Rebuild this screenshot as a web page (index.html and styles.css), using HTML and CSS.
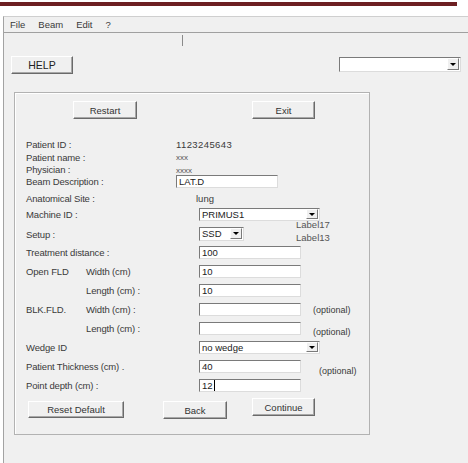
FILE: index.html
```html
<!DOCTYPE html>
<html lang="en">
<head>
    <meta charset="UTF-8">
    <meta name="viewport" content="width=device-width, initial-scale=1.0">
    <title>Beam Setup</title>
    <link rel="stylesheet" href="styles.css">
</head>
<body>
    <div class="strip"></div>
    <div class="window">
        <div class="menubar">
            <span>File</span>
            <span>Beam</span>
            <span>Edit</span>
            <span>?</span>
        </div>
        <div class="toolbar"><div class="sep"></div></div>
        <div class="top-row">
            <button class="btn help">HELP</button>
            <div class="combo top-combo">
                <div class="field"></div>
                <div class="drop"></div>
            </div>
        </div>

        <div class="panel">
            <div class="btn-row">
                <button class="btn restart">Restart</button>
                <button class="btn exit">Exit</button>
            </div>

            <div class="info">
                <div class="row r-id"><span class="lbl">Patient ID :</span><span class="val digits">1123245643</span></div>
                <div class="row r-name"><span class="lbl">Patient name :</span><span class="val small">xxx</span></div>
                <div class="row r-phys"><span class="lbl">Physician :</span><span class="val small low">xxxx</span></div>
                <div class="row r-desc"><span class="lbl">Beam Description :</span><div class="text desc">LAT.D</div></div>
                <div class="row r-site"><span class="lbl">Anatomical Site :</span><span class="val lung">lung</span></div>
                <div class="row r-machine">
                    <span class="lbl l2">Machine ID :</span>
                    <div class="combo machine"><div class="field">PRIMUS1</div><div class="drop"></div></div>
                </div>
                <div class="row r-setup">
                    <span class="lbl l2">Setup :</span>
                    <div class="combo setup"><div class="field">SSD</div><div class="drop"></div></div>
                    <div class="tags">
                        <div>Label17</div>
                        <div>Label13</div>
                    </div>
                </div>
            </div>

            <div class="fields">
                <div class="row"><span class="lbl l2">Treatment distance :</span><div class="text">100</div></div>
                <div class="row"><span class="lbl l2"><span class="grp">Open FLD</span>Width (cm)</span><div class="text">10</div></div>
                <div class="row"><span class="lbl l2"><span class="grp"></span>Length (cm) :</span><div class="text">10</div></div>
                <div class="row"><span class="lbl l2"><span class="grp">BLK.FLD.</span>Width (cm) :</span><div class="text"></div><span class="opt">(optional)</span></div>
                <div class="row"><span class="lbl l2"><span class="grp"></span>Length (cm) :</span><div class="text"></div><span class="opt low">(optional)</span></div>
                <div class="row">
                    <span class="lbl l2">Wedge ID</span>
                    <div class="combo machine"><div class="field">no wedge</div><div class="drop"></div></div>
                </div>
                <div class="row"><span class="lbl l2">Patient Thickness (cm) .</span><div class="text">40</div><span class="opt far">(optional)</span></div>
                <div class="row"><span class="lbl l2">Point depth (cm) :</span><div class="text"><span class="caret">12</span></div></div>
            </div>

            <div class="bottom-row">
                <button class="btn reset">Reset Default</button>
                <button class="btn back">Back</button>
                <button class="btn continue">Continue</button>
            </div>
        </div>
    </div>
</body>
</html>
```

FILE: styles.css
```css
* {
    margin: 0;
    padding: 0;
    box-sizing: border-box;
}

body {
    background: #fff;
    font-family: "Liberation Sans", Arial, sans-serif;
    font-size: 9.5px;
    color: #3a3a3a;
    overflow: hidden;
}

.strip {
    margin-top: 2px;
    width: 457px;
    height: 4px;
    background: #6d1f22;
}

.window {
    margin: 10px 0 0 3px;
    height: 447px;
    background: #f0f0f0;
    border-top: 1px solid #cfcfcf;
    border-left: 1px solid #a3a3a3;
}

.menubar {
    height: 16px;
    display: flex;
    align-items: center;
    gap: 13px;
    padding-left: 6px;
    border-bottom: 1px solid #a0a0a0;
}

.toolbar {
    height: 23px;
    padding: 2px 0 0 178px;
}

.sep {
    width: 1px;
    height: 11px;
    background: #8a8a8a;
}

.top-row {
    height: 18px;
    display: flex;
    justify-content: space-between;
    align-items: flex-start;
    padding: 0 7px;
}

/* raised 3d buttons */
.btn {
    font-family: inherit;
    font-size: 9.5px;
    color: #333;
    background: #f0f0f0;
    border: 1px solid;
    border-color: #fff #6a6a6a #6a6a6a #fff;
    box-shadow: inset -1px -1px 0 #a8a8a8;
    height: 18px;
}

.help {
    width: 62px;
    font-size: 10.5px;
    color: #222;
}

/* sunken fields */
.text, .combo {
    background: #fff;
    border: 1px solid;
    border-color: #7a7a7a #dcdcdc #dcdcdc #7a7a7a;
    height: 13px;
}

.text {
    width: 102px;
    padding-left: 2px;
    line-height: 11px;
    color: #222;
}

.combo {
    display: flex;
    padding: 0 1px 1px 0;
}

.combo .field {
    flex: 1;
    padding-left: 2px;
    line-height: 11px;
    color: #222;
}

.drop {
    width: 12px;
    background: #f0f0f0;
    border: 1px solid;
    border-color: #fff #7a7a7a #7a7a7a #fff;
    display: flex;
    justify-content: center;
    align-items: center;
}

.drop::after {
    content: "";
    border-left: 3px solid transparent;
    border-right: 3px solid transparent;
    border-top: 3px solid #000;
}

.top-combo {
    width: 122px;
    height: 15px;
    margin-top: 1px;
}

.panel {
    margin: 18px 0 0 10px;
    width: 356px;
    height: 343px;
    border: 1px solid #b2b2b2;
    box-shadow: inset 1px 1px 0 #fff;
    padding: 8px 0 0 11px;
}

.btn-row {
    display: flex;
}

.restart {
    width: 64px;
    margin-left: 47px;
}

.exit {
    width: 63px;
    margin-left: 115px;
}

.info {
    margin-top: 19px;
}

.row {
    display: flex;
    align-items: center;
    height: 13px;
}

.lbl {
    width: 150px;
    flex: none;
    white-space: nowrap;
    letter-spacing: -0.15px;
}

.lbl.l2 {
    width: 173px;
}

.grp {
    display: inline-block;
    width: 60px;
}

.digits {
    letter-spacing: 0.4px;
}

.small {
    font-size: 8px;
    color: #555;
}

.low {
    margin-top: 3px;
}

.r-name, .r-phys {
    height: 12px;
}

.r-site {
    height: 20px;
}

.lung {
    margin-left: 20px;
}

.machine {
    width: 121px;
}

.r-setup {
    height: 14px;
    margin-top: 6px;
}

.setup {
    width: 45px;
    height: 14px;
}

.tags {
    align-self: flex-start;
    margin: -9px 0 0 52px;
    line-height: 13px;
    color: #555;
}

.fields {
    display: flex;
    flex-direction: column;
    gap: 6px;
    margin-top: 5px;
}

.opt {
    margin-left: 12px;
    font-size: 9px;
}

.opt.low {
    margin-top: 6px;
}

.opt.far {
    margin: 8px 0 0 18px;
}

.caret {
    border-right: 1px solid #000;
    padding-right: 1px;
}

.bottom-row {
    display: flex;
    align-items: flex-start;
    margin-top: 6px;
}

.reset {
    width: 96px;
    height: 17px;
    margin: 3px 0 0 2px;
}

.back {
    width: 64px;
    margin: 3px 0 0 39px;
}

.continue {
    width: 63px;
    margin-left: 25px;
}
```
